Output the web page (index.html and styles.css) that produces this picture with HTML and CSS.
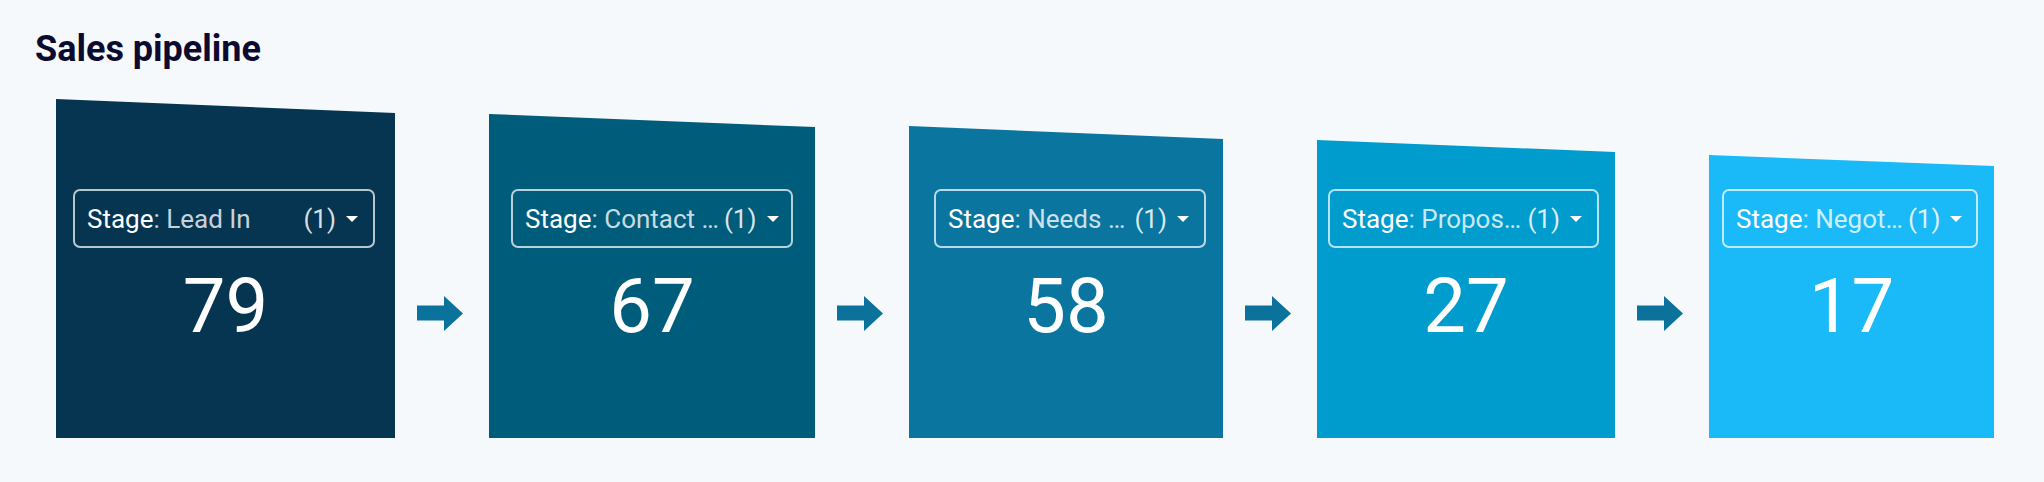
FILE: index.html
```html
<!DOCTYPE html>
<html lang="en">
<head>
  <meta charset="UTF-8" />
  <title>Sales pipeline</title>
  <link rel="stylesheet" href="styles.css">
</head>
<body>

<h2 class="title">Sales pipeline</h2>

<div class="pipeline">
  <div class="stage stage-1">
    <div class="filter" title="Lead In">
      <span class="key">Stage</span><span class="name">: Lead In</span>
      <span class="count">(1)</span><span class="caret"></span>
    </div>
    <div class="value">79</div>
  </div>

  <div class="arrow"><svg viewBox="0 0 46 35" width="46" height="35"><polygon points="0,9.5 27,9.5 27,0 46,17.5 27,35 27,24.5 0,24.5"/></svg></div>

  <div class="stage stage-2">
    <div class="filter" title="Contact Made">
      <span class="key">Stage</span><span class="name">: Contact …</span>
      <span class="count">(1)</span><span class="caret"></span>
    </div>
    <div class="value">67</div>
  </div>

  <div class="arrow"><svg viewBox="0 0 46 35" width="46" height="35"><polygon points="0,9.5 27,9.5 27,0 46,17.5 27,35 27,24.5 0,24.5"/></svg></div>

  <div class="stage stage-3">
    <div class="filter" title="Needs Defined">
      <span class="key">Stage</span><span class="name">: Needs …</span>
      <span class="count">(1)</span><span class="caret"></span>
    </div>
    <div class="value">58</div>
  </div>

  <div class="arrow"><svg viewBox="0 0 46 35" width="46" height="35"><polygon points="0,9.5 27,9.5 27,0 46,17.5 27,35 27,24.5 0,24.5"/></svg></div>

  <div class="stage stage-4">
    <div class="filter" title="Proposal Made">
      <span class="key">Stage</span><span class="name">: Propos…</span>
      <span class="count">(1)</span><span class="caret"></span>
    </div>
    <div class="value">27</div>
  </div>

  <div class="arrow"><svg viewBox="0 0 46 35" width="46" height="35"><polygon points="0,9.5 27,9.5 27,0 46,17.5 27,35 27,24.5 0,24.5"/></svg></div>

  <div class="stage stage-5">
    <div class="filter" title="Negotiations Started">
      <span class="key">Stage</span><span class="name">: Negot…</span>
      <span class="count">(1)</span><span class="caret"></span>
    </div>
    <div class="value">17</div>
  </div>
</div>

</body>
</html>
```

FILE: styles.css
```css
body {
  margin: 0;
  background: #f5f9fb;
  font-family: Roboto, "Liberation Sans", sans-serif;
}
.title {
  margin: 0;
  padding: 28px 0 0 35px;
  font-size: 36px;
  line-height: 42px;
  font-weight: 700;
  color: #0c0a2e;
}
.pipeline {
  display: flex;
  margin: 29px 0 0 56px;
  height: 339px;
}
.stage {
  display: flex;
  flex-direction: column;
  align-items: stretch;
  padding-top: 90px;
  box-sizing: border-box;
}
.stage-1 { width: 339px; background: #053550; clip-path: polygon(0 0, 100% 14px, 100% 100%, 0 100%); }
.stage-2 { width: 326px; background: #005c7b; clip-path: polygon(0 15px, 100% 28px, 100% 100%, 0 100%); }
.stage-3 { width: 314px; background: #0a76a0; clip-path: polygon(0 27px, 100% 40px, 100% 100%, 0 100%); }
.stage-4 { width: 298px; background: #009ccd; clip-path: polygon(0 41px, 100% 53px, 100% 100%, 0 100%); }
.stage-5 { width: 285px; background: #19baf7; clip-path: polygon(0 56px, 100% 67px, 100% 100%, 0 100%); }
.stage-1 .filter { margin: 0 20px 0 17px; }
.stage-2 .filter { margin: 0 22px 0 22px; }
.stage-3 .filter { margin: 0 17px 0 25px; }
.stage-4 .filter { margin: 0 16px 0 11px; }
.stage-5 .filter { margin: 0 16px 0 13px; }
.filter {
  display: flex;
  align-items: center;
  height: 59px;
  box-sizing: border-box;
  padding: 0 15px 0 12px;
  border: 2px solid rgba(255,255,255,0.72);
  border-radius: 7px;
  font-size: 26px;
  color: #fff;
  white-space: nowrap;
}
.key { flex: none; }
.name {
  flex: 1 0 auto;
  color: rgba(255,255,255,0.8);
}
.count {
  flex: none;
  margin-left: 5px;
  color: rgba(255,255,255,0.85);
}
.caret {
  flex: none;
  margin-left: 10px;
  width: 0;
  height: 0;
  border-left: 6px solid transparent;
  border-right: 6px solid transparent;
  border-top: 6px solid #fff;
}
.value {
  margin-top: 20px;
  text-align: center;
  font-size: 76px;
  line-height: 76px;
  color: #fff;
}
.arrow {
  flex: none;
  margin: 197px 26px 0 22px;
  height: 35px;
}
.arrow svg { display: block; fill: #0b729b; }
```
